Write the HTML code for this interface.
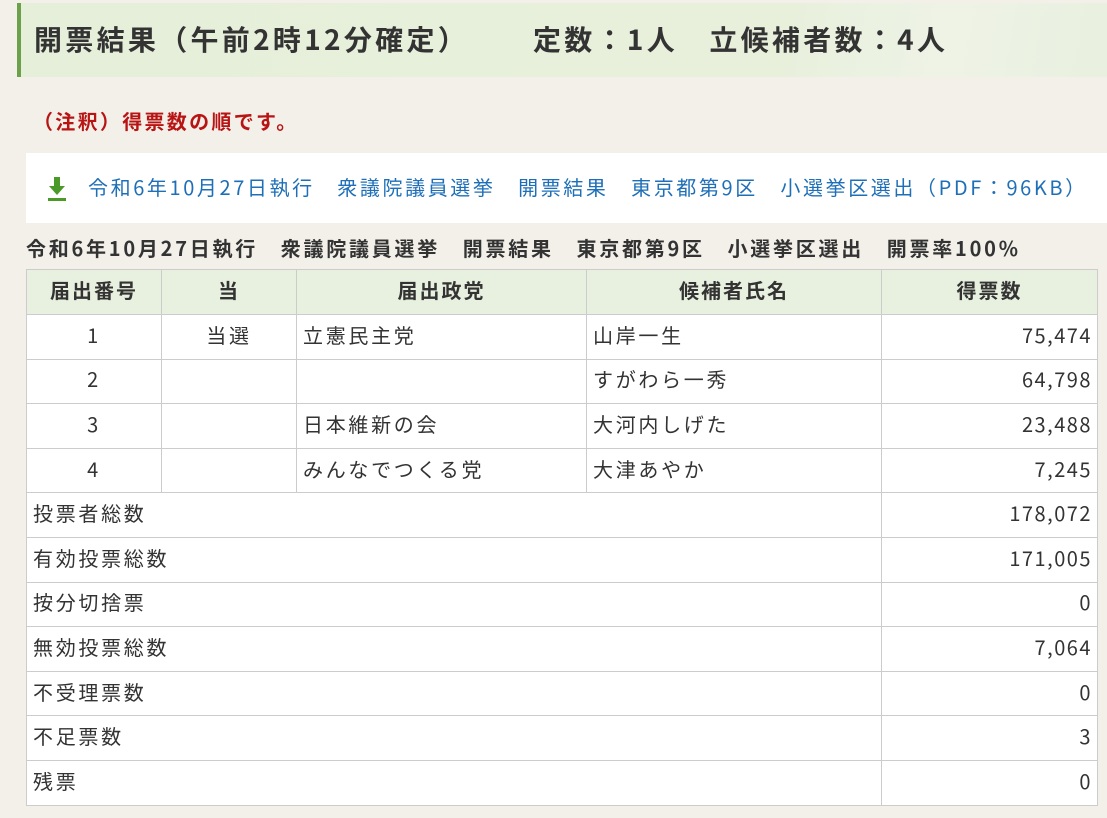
<!DOCTYPE html>
<html><head><meta charset="utf-8"><style>
body{margin:0;width:1107px;height:818px;overflow:hidden;background:#f3f0ea;font-family:"Noto Sans CJK JP","Liberation Sans",sans-serif;color:#333;}
.hd{position:absolute;left:17px;top:3px;width:1090px;height:74px;background:linear-gradient(100deg,#e6efd9 0%,#e8f0dc 70%,#eef3e6 85%,#e9f0df 100%);border-left:4px solid #6aa14a;box-sizing:border-box;}
.hd span{position:absolute;top:17px;font-size:28px;font-weight:bold;color:#333;white-space:nowrap;line-height:38px;letter-spacing:3.3px}
.note{position:absolute;left:33px;top:106px;font-size:20px;font-weight:bold;color:#b81414;letter-spacing:2.3px;line-height:30px}
.lk{position:absolute;left:26px;top:153px;width:1081px;height:70px;background:#fff;}
.lk .t{position:absolute;left:62px;top:19px;font-size:20px;color:#1e6fb8;white-space:nowrap;line-height:30px;letter-spacing:2.6px}
.ttl{position:absolute;left:26px;top:233px;font-size:20px;font-weight:bold;color:#333;white-space:nowrap;letter-spacing:2.75px;line-height:30px}
table{position:absolute;left:26px;top:269px;border-collapse:collapse;background:#fff;font-size:20px;letter-spacing:2.7px}
td,th{border:1px solid #ccc;padding:0 6px 4px;height:44.6px;box-sizing:border-box;line-height:26px;vertical-align:middle}
td.r{letter-spacing:1.5px;padding-right:5px}
th{background:#e8f0df;font-weight:bold;height:45px;letter-spacing:2px}
.c{text-align:center}.r{text-align:right}
</style></head><body>
<div class="hd"><span style="left:13px">開票結果（午前2時12分確定）</span><span style="left:512px">定数：1人　立候補者数：4人</span></div>
<div class="note">（注釈）得票数の順です。</div>
<div class="lk"><svg style="position:absolute;left:20px;top:22px" width="22" height="28" viewBox="0 0 22 28"><rect x="8" y="2" width="6" height="10" fill="#4a9a2a"/><path d="M3 11h16l-8 9z" fill="#4a9a2a"/><rect x="2" y="23" width="18" height="3" fill="#4a9a2a"/></svg><div class="t">令和6年10月27日執行　衆議院議員選挙　開票結果　東京都第9区　小選挙区選出（PDF：96KB）</div></div>
<div class="ttl">令和6年10月27日執行　衆議院議員選挙　開票結果　東京都第9区　小選挙区選出　開票率100%</div>
<table>
<colgroup><col style="width:135px"><col style="width:135px"><col style="width:290px"><col style="width:295px"><col style="width:216px"></colgroup>
<tr><th>届出番号</th><th>当</th><th>届出政党</th><th>候補者氏名</th><th>得票数</th></tr>
<tr><td class="c">1</td><td class="c">当選</td><td>立憲民主党</td><td>山岸一生</td><td class="r">75,474</td></tr>
<tr><td class="c">2</td><td></td><td></td><td>すがわら一秀</td><td class="r">64,798</td></tr>
<tr><td class="c">3</td><td></td><td>日本維新の会</td><td>大河内しげた</td><td class="r">23,488</td></tr>
<tr><td class="c">4</td><td></td><td>みんなでつくる党</td><td>大津あやか</td><td class="r">7,245</td></tr>
<tr><td colspan="4">投票者総数</td><td class="r">178,072</td></tr>
<tr><td colspan="4">有効投票総数</td><td class="r">171,005</td></tr>
<tr><td colspan="4">按分切捨票</td><td class="r">0</td></tr>
<tr><td colspan="4">無効投票総数</td><td class="r">7,064</td></tr>
<tr><td colspan="4">不受理票数</td><td class="r">0</td></tr>
<tr><td colspan="4">不足票数</td><td class="r">3</td></tr>
<tr><td colspan="4">残票</td><td class="r">0</td></tr>
</table>
</body></html>
